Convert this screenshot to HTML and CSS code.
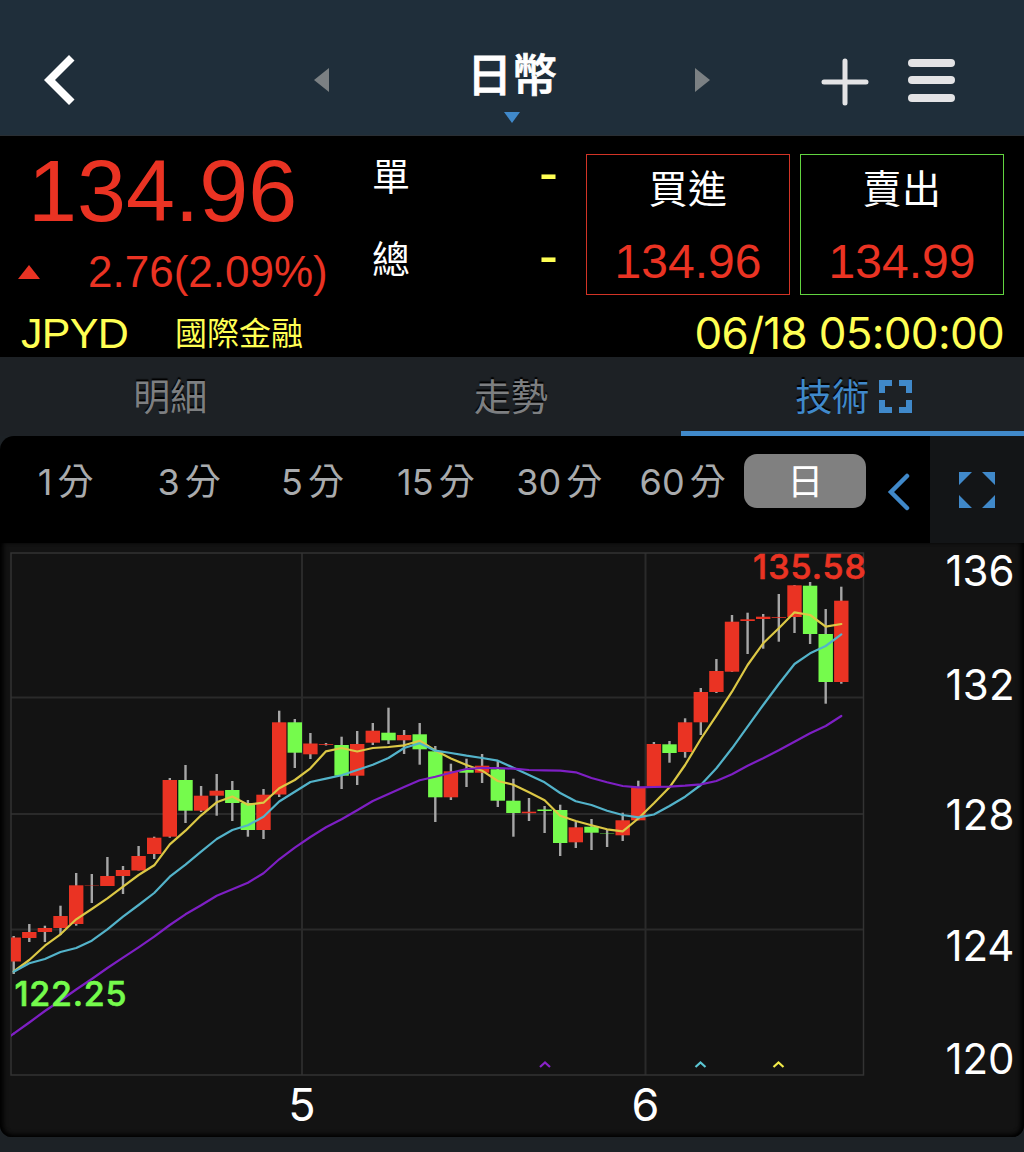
FILE: index.html
```
<!DOCTYPE html>
<html lang="zh-Hant">
<head>
    <meta charset="UTF-8">
    <meta name="viewport" content="width=device-width, initial-scale=1.0">
    <title>日幣</title>
    <link rel="stylesheet" href="styles.css">
</head>
<body>
    <header class="header">
        <svg class="back" width="31" height="50" viewBox="0 0 31 50"><path d="M25 0L30.500 5.500L11 25L30.500 44.500L25 50L0 25Z" fill="#fff"/></svg>
        <div class="switcher">
            <svg width="15" height="24" viewBox="0 0 15 24"><path d="M0 12L15 0V24Z" fill="#7b8083"/></svg>
            <div class="title">
                <h1>日幣</h1>
                <svg class="title-arrow" width="16" height="11" viewBox="0 0 16 11"><path d="M0 0H16L8 11Z" fill="#4089ca"/></svg>
            </div>
            <svg width="15" height="24" viewBox="0 0 15 24"><path d="M15 12L0 0V24Z" fill="#7b8083"/></svg>
        </div>
        <svg class="plus" width="48" height="48" viewBox="0 0 48 48"><path d="M24 3V45M3 24H45" stroke="#e3e3e5" stroke-width="5" stroke-linecap="round"/></svg>
        <div class="menu"><span></span><span></span><span></span></div>
    </header>

    <section class="quote">
        <div class="quote-main">
            <div class="price-col">
                <div class="price">134.96</div>
                <div class="change">
                    <svg width="22" height="14" viewBox="0 0 22 14"><path d="M11 0L22 14H0Z" fill="#ea3323"/></svg>
                    <span>2.76(2.09%)</span>
                </div>
            </div>
            <div class="volume">
                <div class="volume-row"><span>單</span><b>-</b></div>
                <div class="volume-row"><span>總</span><b>-</b></div>
            </div>
            <div class="deal buy"><span>買進</span><strong>134.96</strong></div>
            <div class="deal sell"><span>賣出</span><strong>134.99</strong></div>
        </div>
        <div class="quote-info">
            <span class="code">JPYD</span>
            <span class="market">國際金融</span>
            <span class="time">06/18 05:00:00</span>
        </div>
    </section>

    <nav class="tabs">
        <div class="tab">明細</div>
        <div class="tab">走勢</div>
        <div class="tab active">技術
            <svg width="33" height="33" viewBox="0 0 33 33"><path d="M3 13V3H13M20 3H30V13M30 20V30H20M13 30H3V20" fill="none" stroke="#4089ca" stroke-width="6"/></svg>
        </div>
    </nav>

    <div class="periods">
        <div class="period-list">
            <div class="period">1<span>分</span></div>
            <div class="period">3<span>分</span></div>
            <div class="period">5<span>分</span></div>
            <div class="period">15<span>分</span></div>
            <div class="period">30<span>分</span></div>
            <div class="period">60<span>分</span></div>
            <div class="period active">日</div>
        </div>
        <svg class="collapse" width="24" height="38" viewBox="0 0 24 38"><path d="M20 3L4 19L20 35" fill="none" stroke="#4089ca" stroke-width="4.500" stroke-linecap="round"/></svg>
        <div class="expand">
            <svg width="36" height="36" viewBox="0 0 36 36"><path d="M0 0H13L0 13ZM23 0H36V13ZM36 23V36H23ZM0 23L13 36H0Z" fill="#4089ca"/></svg>
        </div>
    </div>

    <main class="chart-panel">
        <svg id="chart" class="chart" width="1024" height="594" viewBox="0 543 1024 594"></svg>
    </main>

    <script src="chart.js"></script>
</body>
</html>
```
FILE: styles.css
```
* {
    box-sizing: border-box;
}

body {
    margin: 0;
    width: 1024px;
    height: 1152px;
    overflow: hidden;
    background-color: #1d2226;
    font-family: "Liberation Sans", "Noto Sans CJK TC", sans-serif;
    color: #fff;
}

svg {
    display: block;
    flex: none;
}

/* header */
.header {
    display: flex;
    align-items: center;
    height: 136px;
    padding: 25px 69px 0 44px;
    background-color: #1f2e3a;
    border-bottom: 1px solid #292e33;
}

.switcher {
    display: flex;
    justify-content: space-between;
    align-items: center;
    width: 396px;
    margin-left: 239px;
}

.title {
    position: relative;
}

.title h1 {
    margin: 0 0 14px;
    font-size: 45px;
    line-height: 60px;
    font-weight: 500;
    font-family: "Noto Sans CJK TC", sans-serif;
    -webkit-text-stroke: 0.8px #fff;
}

.title-arrow {
    position: absolute;
    left: 50%;
    bottom: -6px;
    margin-left: -8px;
}

.plus {
    margin: 3px 0 0 111px;
}

.menu {
    display: flex;
    flex-direction: column;
    justify-content: space-between;
    width: 47px;
    height: 43px;
    margin-left: 39px;
}

.menu span {
    height: 8px;
    border-radius: 4px;
    background-color: #e3e3e5;
}

/* quote */
.quote {
    height: 221px;
    background-color: #000;
}

.quote-main {
    display: flex;
    height: 173px;
    padding: 10px 20px 0 18px;
}

.price-col {
    width: 354px;
    color: #ea3323;
}

.price {
    padding-left: 10px;
    font-size: 88px;
    line-height: 90px;
}

.change {
    display: flex;
    align-items: center;
    gap: 48px;
    font-size: 44px;
    line-height: 72px;
}

.volume {
    width: 186px;
    margin-right: 28px;
}

.volume-row {
    display: flex;
    justify-content: space-between;
    align-items: center;
    height: 83px;
    font-size: 38px;
    line-height: 60px;
    padding-bottom: 22px;
}

.volume-row b {
    padding-bottom: 9px;
    font-size: 57px;
    font-weight: normal;
    color: #ffff54;
}

.deal {
    display: flex;
    flex-direction: column;
    align-items: center;
    width: 204px;
    height: 141px;
    margin-top: 8px;
    border: 1px solid #d23426;
}

.deal.sell {
    margin-left: 10px;
    border-color: #62d440;
}

.deal span {
    font-size: 39px;
    line-height: 69px;
    letter-spacing: 0.5px;
}

.deal strong {
    font-size: 48px;
    line-height: 75px;
    font-weight: normal;
    color: #ea3323;
}

.quote-info {
    display: flex;
    align-items: center;
    height: 48px;
    padding: 0 20px 0 21px;
    color: #ffff54;
}

.code {
    width: 154px;
    font-size: 43px;
    letter-spacing: -0.7px;
}

.market {
    padding-bottom: 4px;
    font-size: 32px;
}

.time {
    margin-left: auto;
    font-family: Inter, sans-serif;
    font-size: 44px;
    letter-spacing: -0.7px;
}

/* tabs */
.tabs {
    display: flex;
    height: 79px;
    background-color: #1d2125;
}

.tab {
    flex: 1;
    display: flex;
    justify-content: center;
    align-items: center;
    gap: 10px;
    padding-top: 2px;
    font-size: 37px;
    color: #7d7f81;
    text-shadow: 0 -2px 1px #000;
    border-bottom: 5px solid transparent;
}

.tab.active {
    padding-left: 2px;
    color: #4089ca;
    border-bottom-color: #4089ca;
}

.tab svg {
    margin-top: 2px;
}

/* periods */
.periods {
    display: flex;
    height: 107px;
    background-color: #000;
    border-top-left-radius: 14px;
}

.period-list {
    display: flex;
    padding: 18px 0 0 4px;
}

.period {
    width: 123.400px;
    height: 54px;
    font-family: Inter, "Noto Sans CJK TC", sans-serif;
    font-size: 36px;
    line-height: 57px;
    text-align: center;
    color: #a9abad;
}

.period span {
    margin-left: 5px;
}

.period.active {
    width: 122px;
    border-radius: 13px;
    background-color: #808080;
    color: #fff;
}

.collapse {
    margin: 37px 0 0 21px;
}

.expand {
    display: flex;
    justify-content: center;
    align-items: center;
    width: 94px;
    margin-left: auto;
    background-color: #131517;
}

/* chart */
.chart-panel {
    height: 594px;
    border-radius: 0 0 12px 12px;
    background-color: #131313;
    box-shadow: inset 0 -4px 5px -2px #000, inset 5px 0 5px -2px #000, inset -5px 0 5px -2px #000;
}

.chart text {
    font-family: Inter, sans-serif;
    fill: #fff;
}

.grid {
    fill: none;
    stroke: #2a2a2a;
    stroke-width: 2;
}

.frame {
    stroke: #333;
    stroke-width: 1.500;
}

.line {
    fill: none;
    stroke-width: 2.200;
    stroke-linejoin: round;
    stroke-linecap: round;
}

.axis {
    font-size: 42px;
}

.month {
    font-size: 45px;
    text-anchor: middle;
}

.chart .high {
    font-size: 34px;
    font-weight: 500;
    fill: #ea3323;
    stroke: #ea3323;
    stroke-width: 0.600;
}

.chart .low {
    font-size: 34px;
    font-weight: 500;
    fill: #75fb4c;
    stroke: #75fb4c;
    stroke-width: 0.600;
}
```
FILE: chart.js
```
const RED = '#ea3323';
const GREEN = '#75fb4c';
const X0 = 13.7;
const STEP = 15.615;

// [color, body top, body bottom, wick top, wick bottom]
const candles = [
    ['r', 937.5, 961.5, 936, 974], ['r', 932, 938, 924, 942], ['r', 928, 932, 925.7, 942],
    ['r', 916, 928, 905.7, 935], ['r', 885.3, 924, 873, 925.7], ['r', 885.4, 885.8, 874, 903],
    ['r', 876, 886, 857, 886], ['r', 870, 876, 866, 894], ['r', 856, 870.5, 846, 870.5],
    ['r', 837.7, 854, 836.7, 859], ['r', 780, 836.7, 778, 837.7], ['g', 780, 810.7, 765, 823],
    ['r', 795.7, 810.7, 786, 812], ['r', 790.7, 795.7, 774, 815.7], ['g', 790, 803, 781, 821],
    ['g', 803, 830, 800, 836.7], ['r', 794.7, 830, 789, 839], ['r', 722.3, 794.5, 710.7, 797],
    ['g', 722.3, 752.7, 719, 768], ['r', 743.5, 754.3, 733, 759], ['r', 744, 744.8, 743, 745.5],
    ['g', 745, 775.7, 736.7, 789], ['r', 744, 775.7, 731, 785], ['r', 730.7, 742.7, 723, 745],
    ['g', 732.7, 740.3, 707.7, 744], ['r', 735, 740.3, 730, 754], ['g', 734.3, 749.3, 723, 764.7],
    ['g', 751.3, 797.3, 746, 822], ['r', 771.3, 797.3, 763.7, 800], ['g', 770, 772.7, 758.7, 787],
    ['r', 765.7, 772.7, 754, 783], ['g', 769.3, 800.7, 761, 807], ['g', 800.7, 813, 778.7, 836.7],
    ['r', 811.7, 813.2, 798, 821], ['g', 809.5, 811, 806, 833], ['g', 810, 843, 804.7, 856],
    ['r', 827.3, 842.3, 822, 848], ['g', 826.7, 832.7, 819, 850], ['g', 833.1, 833.5, 829, 847],
    ['r', 820.3, 835.3, 812.7, 841], ['r', 787.3, 820.3, 780.7, 820.3], ['r', 744, 786.5, 742, 788],
    ['g', 744.3, 753, 741, 762.7], ['r', 722.3, 752, 718.3, 757.7], ['r', 692, 722.3, 688, 735],
    ['r', 671, 692, 659, 693], ['r', 621.7, 671.7, 615, 672], ['r', 619.3, 621, 612.7, 654],
    ['r', 616.7, 619, 614, 648.7], ['r', 617, 617.8, 594, 641.7], ['r', 585.3, 617, 585, 633],
    ['g', 585.7, 634, 582, 644], ['g', 634, 682, 609, 703.7], ['r', 600.7, 682, 586.7, 683.7]
];

const ma5 = [971.5, 960, 945.7, 934.3, 919.3, 909, 898.3, 886.7, 875, 865.3, 844.3, 830.7, 815.3, 802.3, 796.5, 804.7, 802.7, 788.3, 780, 768.3, 751.3, 748, 751.5, 748, 747, 745.3, 740.7, 750.5, 758.5, 765, 770.7, 781, 784.7, 792.3, 800.3, 815.7, 821, 825.3, 829.3, 831.3, 818.5, 803.3, 787.3, 765, 739, 715.7, 691.7, 665, 643.3, 628.3, 612.3, 615, 626.7, 624];
const ma10 = [971.7, 963.3, 959, 952, 948, 940.7, 929.3, 916.7, 905, 893, 876.7, 864.7, 851.7, 839, 830, 825.3, 816.7, 801.5, 791.7, 782, 778.7, 775.3, 770, 764.7, 758, 748, 743.3, 750.7, 753, 755.7, 758, 760.7, 767.7, 775, 782.3, 793, 801.3, 805, 810.7, 815, 817.3, 814.5, 806, 796.7, 785, 768.3, 748.3, 726.7, 705, 684, 664, 653.3, 646, 634.3];
const ma20 = [1033.7, 1022.5, 1011, 1000.5, 989.5, 979, 968, 957.7, 947.3, 936.7, 925, 914.3, 905.3, 895.7, 889.3, 882.7, 873.3, 859.3, 847.7, 837, 827.3, 819.3, 810.3, 801, 794, 787, 780.3, 776.7, 772.7, 769, 768, 768, 768.7, 770, 770.3, 770.7, 772.3, 778, 782.3, 786, 787.3, 787, 786.7, 785.7, 784.3, 781, 774.3, 765.7, 758.3, 750.3, 741.7, 733.3, 726, 716];

function x(i) {
    return +(X0 + i * STEP).toFixed(1);
}

function line(values, color) {
    const points = values.map((v, i) => `${x(i)},${v}`).join(' ');
    return `<polyline class="line" points="${points}" stroke="${color}"/>`;
}

let svg = '<path class="grid" d="M11 697.500H863M11 814H863M11 929.500H863M302 553V1075M645.500 553V1075"/>';
svg += '<rect class="grid frame" x="11" y="553" width="852.500" height="522"/>';
svg += '<clipPath id="plot"><rect x="11" y="553" width="853" height="522"/></clipPath>';

svg += '<g clip-path="url(#plot)">';
candles.forEach(([c, top, bottom, high, low], i) => {
    const color = c === 'r' ? RED : GREEN;
    svg += `<rect x="${x(i) - 1.2}" y="${high}" width="2.400" height="${low - high}" fill="#a6a6a6"/>`;
    svg += `<rect x="${x(i) - 7.2}" y="${top}" width="14.400" height="${bottom - top}" fill="${color}"/>`;
});
svg += line(ma5, '#dcc845') + line(ma10, '#53b3ca') + line(ma20, '#7e1fc4');
svg += '<path class="line" d="M11 1035.600L13.700 1033.700" stroke="#7e1fc4"/>';
svg += '</g>';

// highest and lowest price
svg += '<text class="high" x="753" y="579" textLength="113">135.58</text>';
svg += '<text class="low" x="14.500" y="1005.500" textLength="112">122.25</text>';

// cross markers
[[545, '#8a22c9'], [700.5, '#5bc6d3'], [778.5, '#f2ea49']].forEach(([cx, color]) => {
    svg += `<path d="M${cx - 5} 1067L${cx} 1062.500L${cx + 5} 1067" fill="none" stroke="${color}" stroke-width="2.200"/>`;
});

// axis labels
[[136, 586], [132, 699.5], [128, 830], [124, 960.5], [120, 1074]].forEach(([value, y]) => {
    svg += `<text class="axis" x="945.500" y="${y}" textLength="69">${value}</text>`;
});
svg += '<text class="month" x="302" y="1120.500">5</text><text class="month" x="645.500" y="1120.500">6</text>';

document.getElementById('chart').innerHTML = svg;
```
